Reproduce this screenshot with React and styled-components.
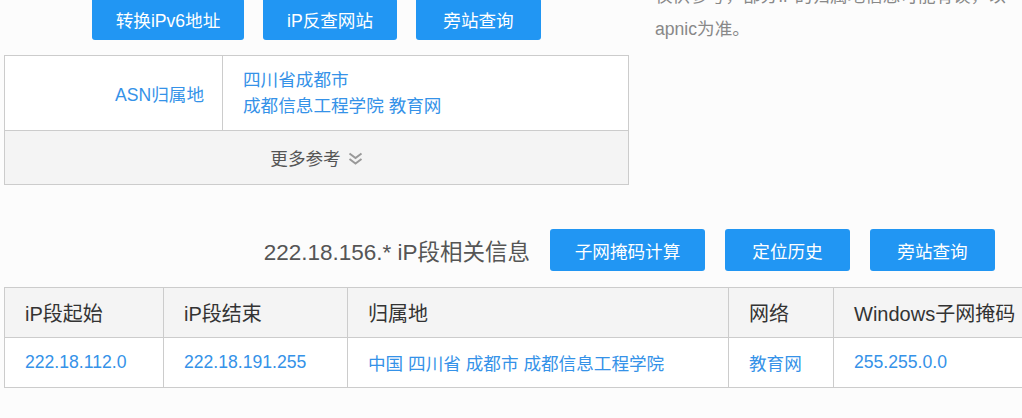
import styled, { createGlobalStyle } from 'styled-components';

const GlobalStyle = createGlobalStyle`
  html, body {
    margin: 0;
    padding: 0;
    background: #fcfcfc;
  }
  body {
    font-family: "Liberation Sans", "Noto Sans CJK SC", sans-serif;
    font-size: 17.6px;
    color: #333;
    overflow: hidden;
  }
`;

const Page = styled.div`
  width: 1022px;
  height: 418px;
  overflow: hidden;
  background: #fcfcfc;
`;

const Top = styled.div`
  display: grid;
  grid-template-columns: 625px 1fr;
  column-gap: 26px;
  padding-left: 4px;
  margin-top: -2px;
`;

const LeftCol = styled.div`
  display: flex;
  flex-direction: column;
`;

const ButtonRow = styled.div`
  display: flex;
  justify-content: center;
  gap: 19px;
`;

const Button = styled.button`
  width: ${({ $w }) => $w}px;
  height: 42px;
  padding: 0;
  border: none;
  border-radius: 3px;
  background: #2196f3;
  color: #fff;
  font-family: inherit;
  font-size: 17.6px;
  cursor: pointer;
`;

const InfoBox = styled.div`
  margin-top: 15px;
  border: 1px solid #ccc;
  background: #fff;
`;

const InfoRow = styled.div`
  display: grid;
  grid-template-columns: 218px 1fr;
`;

const Label = styled.div`
  display: flex;
  align-items: center;
  justify-content: flex-end;
  padding-right: 18px;
  border-right: 1px solid #ccc;
  color: #3592e8;
`;

const Value = styled.div`
  padding: 11px 20px;
  line-height: 26px;
  color: #3592e8;
`;

const MoreRow = styled.div`
  height: 53px;
  border-top: 1px solid #ccc;
  background: #f4f4f4;
  display: flex;
  align-items: center;
  justify-content: center;
  gap: 7px;
  color: #555;
  svg {
    margin-top: 1px;
  }
`;

const Note = styled.div`
  margin-top: -18px;
  color: #888;
  line-height: 33px;
  white-space: nowrap;
`;

const NoteLine = styled.div``;

const SectionHead = styled.div`
  margin-top: 44px;
  display: flex;
  justify-content: flex-end;
  align-items: center;
  gap: 20px;
  padding-right: 27px;
`;

const Title = styled.h2`
  margin: 0;
  font-size: 22.5px;
  font-weight: normal;
  color: #555;
`;

const Table = styled.table`
  margin: 16px 0 0 4px;
  width: 1050px;
  border-collapse: collapse;
  table-layout: fixed;
  background: #fff;
`;

const Th = styled.th`
  height: 49px;
  padding: 0 0 0 20px;
  border: 1px solid #ccc;
  background: #f4f4f4;
  text-align: left;
  font-size: 20px;
  font-weight: normal;
  color: #333;
  white-space: nowrap;
`;

const Td = styled.td`
  height: 49px;
  padding: 0 0 0 20px;
  border: 1px solid #ccc;
  color: #3592e8;
  white-space: nowrap;
`;

const columns = [159, 184, 381, 105, 221];

function DoubleChevron() {
  return (
    <svg width="15" height="13" viewBox="0 0 15 13" fill="none" stroke="#999" strokeWidth="2" strokeLinejoin="miter">
      <polyline points="1.5,1.5 7.5,6 13.5,1.5" />
      <polyline points="1.5,7 7.5,11.5 13.5,7" />
    </svg>
  );
}

export default function App() {
  return (
    <Page>
      <GlobalStyle />
      <Top>
        <LeftCol>
          <ButtonRow>
            <Button $w={152}>转换iPv6地址</Button>
            <Button $w={134}>iP反查网站</Button>
            <Button $w={125}>旁站查询</Button>
          </ButtonRow>
          <InfoBox>
            <InfoRow>
              <Label>ASN归属地</Label>
              <Value>
                四川省成都市
                <br />
                成都信息工程学院 教育网
              </Value>
            </InfoRow>
            <MoreRow>
              更多参考
              <DoubleChevron />
            </MoreRow>
          </InfoBox>
        </LeftCol>
        <Note>
          <NoteLine>仅供参考，部分IP的归属地信息可能有误，以</NoteLine>
          <NoteLine>apnic为准。</NoteLine>
        </Note>
      </Top>

      <SectionHead>
        <Title>222.18.156.* iP段相关信息</Title>
        <Button $w={155}>子网掩码计算</Button>
        <Button $w={125}>定位历史</Button>
        <Button $w={125}>旁站查询</Button>
      </SectionHead>

      <Table>
        <colgroup>
          {columns.map((w, i) => (
            <col key={i} style={{ width: w }} />
          ))}
        </colgroup>
        <thead>
          <tr>
            <Th>iP段起始</Th>
            <Th>iP段结束</Th>
            <Th>归属地</Th>
            <Th>网络</Th>
            <Th>Windows子网掩码</Th>
          </tr>
        </thead>
        <tbody>
          <tr>
            <Td>222.18.112.0</Td>
            <Td>222.18.191.255</Td>
            <Td>中国 四川省 成都市 成都信息工程学院</Td>
            <Td>教育网</Td>
            <Td>255.255.0.0</Td>
          </tr>
        </tbody>
      </Table>
    </Page>
  );
}
